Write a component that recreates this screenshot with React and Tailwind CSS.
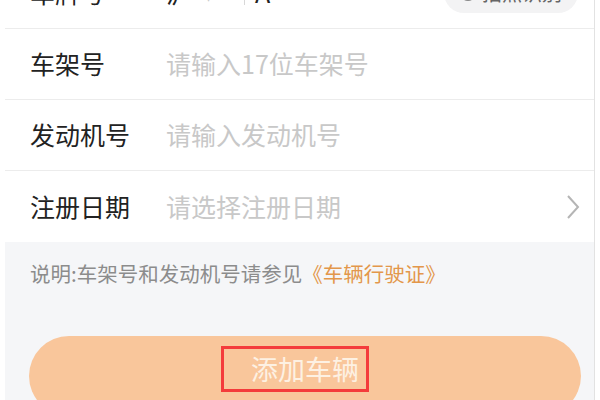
import React from 'react';

const font = { fontFamily: '"Noto Sans CJK SC", "Noto Sans", sans-serif' };

const Chevron = () => (
  <svg width="16" height="26" viewBox="0 0 16 26" fill="none" stroke="#b5b5b5" strokeWidth="2">
    <path d="M3 2 L13 13 L3 24" />
  </svg>
);

const FieldRow = ({ label, placeholder, arrow = false, last = false }) => (
  <div className={`shrink-0 flex items-center h-[71px] pl-[25px] pr-[13px] ${last ? '' : 'border-b border-[#ececec]'}`}>
    <span className="w-[136px] text-[25px] text-[#222]">{label}</span>
    <span className="flex-1 text-[25px] text-[#c8c8c8]">{placeholder}</span>
    {arrow && <Chevron />}
  </div>
);

export default function App() {
  return (
    <div className="w-[600px] h-[400px] overflow-hidden bg-white" style={font}>
      <div className="ml-[5px] w-[590px] h-[400px] border-r border-[#e2e2e2] flex flex-col">
        <div className="shrink-0 mt-[-43px] flex items-center h-[72px] border-b border-[#ececec] pl-[25px] pr-[16px]">
          <span className="w-[136px] text-[25px] text-[#222]">车牌号</span>
          <span className="text-[25px] text-[#222]">沪</span>
          <span className="ml-[12px] text-[22px] text-[#c8c8c8]">▾</span>
          <span className="ml-[30px] h-[24px] w-px bg-[#d8d8d8]" />
          <span className="ml-[10px] text-[25px] text-[#222]">A</span>
          <div className="ml-auto flex items-center gap-[6px] h-[40px] px-[16px] rounded-full bg-[#f3f3f4] text-[20px] text-[#666]">
            <span className="w-[16px] h-[16px] rounded-full border-2 border-[#888]" />
            拍照识别
          </div>
        </div>
        <FieldRow label="车架号" placeholder="请输入17位车架号" />
        <FieldRow label="发动机号" placeholder="请输入发动机号" />
        <FieldRow label="注册日期" placeholder="请选择注册日期" arrow last />
        <div className="flex-1 bg-[#f5f6f8] flex flex-col">
          <p className="mt-[16px] pl-[25px] text-[20.5px] text-[#8c8c8c]">
            说明:车架号和发动机号请参见<span className="text-[#e3974b]">《车辆行驶证》</span>
          </p>
          <div className="shrink-0 mt-[47px] ml-[24px] mr-[13px] h-[80px] rounded-full bg-[#f9c69b] flex justify-center pt-[10px]">
            <div className="mr-[20px] w-[148px] h-[46px] border-[3px] border-[#f43b3b] flex items-center justify-center">
              <span className="text-[27px] text-[#fdf1e3] pl-[20px]">添加车辆</span>
            </div>
          </div>
        </div>
      </div>
    </div>
  );
}
